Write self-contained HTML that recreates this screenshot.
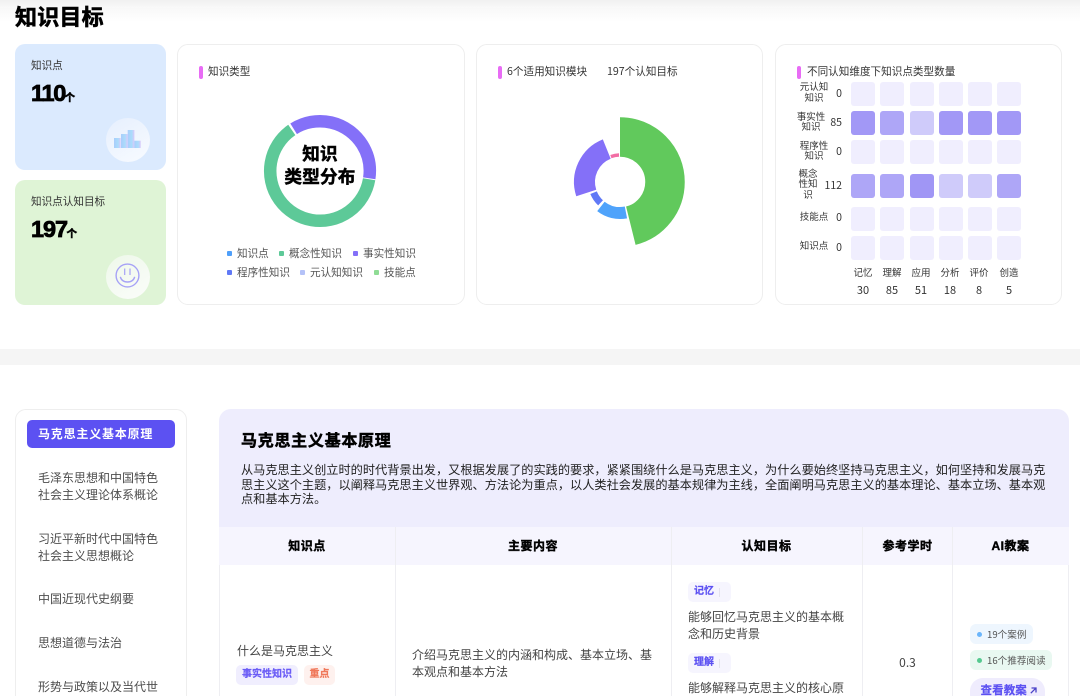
<!DOCTYPE html>
<html lang="zh"><head><meta charset="utf-8"><style>
*{box-sizing:border-box;margin:0;padding:0}
html,body{width:1080px;height:696px;overflow:hidden;background:#fff}
body{position:relative;font-family:"Liberation Sans","Noto Sans CJK SC",sans-serif;color:#333}
.a{position:absolute;white-space:nowrap}
.t{position:absolute;white-space:nowrap;line-height:14px}
.n{font-family:"Noto Sans CJK SC","Liberation Sans",sans-serif}
.b{font-weight:700}
.h{font-weight:700;color:#000;-webkit-text-stroke:.6px #000}
.card{position:absolute;top:44px;height:261px;background:#fff;border:1px solid #eeeeee;border-radius:11px}
.bar{position:absolute;top:66px;width:4px;height:13px;border-radius:2px;background:#e86cf5}
.c{position:absolute;width:24px;height:24px;border-radius:3px;background:#f0eefe}
.lab{position:absolute;font-size:9.5px;line-height:10.5px;text-align:center;color:#333;white-space:nowrap}
.ctr{position:absolute;text-align:center;font-size:9.5px;line-height:14px;color:#333}
.num{position:absolute;left:818px;width:24px;text-align:right;font-size:10.5px;line-height:14px;color:#333;font-family:"Noto Sans CJK SC","Liberation Sans",sans-serif}
.cnt{position:absolute;top:282.5px;width:30px;text-align:center;font-size:11px;line-height:14px;color:#333;font-family:"Noto Sans CJK SC","Liberation Sans",sans-serif}
.lg{position:absolute;font-size:10.6px;line-height:14px;color:#555;white-space:nowrap}
.sq{position:absolute;width:5px;height:5px;border-radius:1px}
.nav{position:absolute;left:38px;font-size:12px;line-height:17px;color:#4d4d4d;white-space:nowrap}
.vl{position:absolute;width:1px;background:#eeeef2}
.th{position:absolute;top:527px;height:38px;line-height:39px;text-align:center;font-size:12px;font-weight:700;color:#000;-webkit-text-stroke:.4px #000;letter-spacing:.04em}
.tag{position:absolute;height:20px;line-height:19px;border-radius:5px;font-size:10px;font-weight:700;white-space:nowrap;-webkit-text-stroke:.2px currentColor}
.pill{position:absolute;height:20px;line-height:20px;border-radius:6px;font-size:9.6px;color:#555;white-space:nowrap}
.dot{position:absolute;width:5px;height:5px;border-radius:50%;top:7.5px;left:6.5px}
</style></head><body>
<div class="a" style="left:0;top:0;width:1080px;height:8px;background:linear-gradient(#f0f0f0,#f9f9f9)"></div>
<div class="a" style="left:0;top:8px;width:1080px;height:14px;background:linear-gradient(#f8f8f8,#fff)"></div>
<div class="a h" style="left:15px;top:4px;font-size:22px;line-height:28px;letter-spacing:.2px">知识目标</div>

<div class="a" style="left:15px;top:44px;width:151px;height:126px;border-radius:10px;background:#dbeafe"></div>
<div class="t" style="left:31px;top:58.5px;font-size:10.6px;color:#333">知识点</div>
<div class="a h" style="left:31px;top:79px;font-size:23.5px;line-height:28px;letter-spacing:-1.3px;-webkit-text-stroke:.8px #000">110</div>
<div class="a h" style="left:64.5px;top:90px;font-size:10.5px;line-height:16px;-webkit-text-stroke:.5px #000">个</div>
<div class="a" style="left:106px;top:118px;width:44px;height:44px;border-radius:50%;background:linear-gradient(150deg,#e6effe,#f8fbff)"></div>
<svg class="a" style="left:106px;top:118px" width="44" height="44"><defs><linearGradient id="g"><stop offset="0" stop-color="#a9cdfb"/><stop offset=".6" stop-color="#aadcfb"/><stop offset="1" stop-color="#dcc8fa"/></linearGradient></defs><rect x="8" y="20" width="6.700" height="10" fill="url(#g)"/><rect x="15" y="16" width="6.700" height="14" fill="url(#g)"/><rect x="21.700" y="12" width="6.700" height="18" fill="url(#g)"/><rect x="28.300" y="22.700" width="6.400" height="7.300" fill="url(#g)"/></svg>

<div class="a" style="left:15px;top:180px;width:151px;height:125px;border-radius:10px;background:#dff4d6"></div>
<div class="t" style="left:31px;top:194.5px;font-size:10.6px;color:#333">知识点认知目标</div>
<div class="a h" style="left:31px;top:215px;font-size:23.5px;line-height:28px;letter-spacing:-1.100px;-webkit-text-stroke:.8px #000">197</div>
<div class="a h" style="left:66.500px;top:226px;font-size:10.500px;line-height:16px;-webkit-text-stroke:.5px #000">个</div>
<div class="a" style="left:106px;top:255px;width:44px;height:44px;border-radius:50%;background:linear-gradient(150deg,#eef8ea,#fbfdfa)"></div>
<svg class="a" style="left:106px;top:255px" width="44" height="44" fill="none" stroke="#a6a2f6" stroke-width="1.400"><circle cx="21.500" cy="20.500" r="11.400"/><path d="M18.700 13.500v6.500M24 13.500v6.500" stroke-width="1.200"/><path d="M14.300 21.800c1 3.600 3.800 5.200 7.200 5.200s6.200-1.600 7.200-5.200"/></svg>

<div class="card" style="left:176.500px;width:288px"></div>
<div class="bar" style="left:199px"></div>
<div class="t" style="left:208px;top:65px;font-size:10.6px">知识类型</div>
<svg class="a" style="left:260px;top:111px" width="120" height="120" fill="none">
<circle cx="60" cy="60" r="49.800" stroke="#5dc998" stroke-width="12.500" pathLength="360" stroke-dasharray="226 134" transform="rotate(9.500 60 60)"/>
<circle cx="60" cy="60" r="49.800" stroke="#8470f8" stroke-width="12.500" pathLength="360" stroke-dasharray="130.500 229.500" transform="rotate(-122 60 60)"/>
</svg>
<div class="a h" style="left:270px;top:142.500px;width:100px;text-align:center;font-size:17.600px;line-height:23.500px;letter-spacing:.2px;-webkit-text-stroke:.5px #000">知识<br>类型分布</div>
<div class="sq" style="left:227px;top:251px;background:#4f9ffa"></div><div class="lg" style="left:237px;top:247px">知识点</div>
<div class="sq" style="left:279px;top:251px;background:#5dc998"></div><div class="lg" style="left:289px;top:247px">概念性知识</div>
<div class="sq" style="left:353px;top:251px;background:#8470f8"></div><div class="lg" style="left:363px;top:247px">事实性知识</div>
<div class="sq" style="left:227px;top:270px;background:#6079f6"></div><div class="lg" style="left:237px;top:266px">程序性知识</div>
<div class="sq" style="left:300px;top:270px;background:#b4c2f8"></div><div class="lg" style="left:310px;top:266px">元认知知识</div>
<div class="sq" style="left:374px;top:270px;background:#8fdc95"></div><div class="lg" style="left:384px;top:266px">技能点</div>

<div class="card" style="left:475.500px;width:287px"></div>
<div class="bar" style="left:498px"></div>
<div class="t n" style="left:507px;top:64.500px;font-size:10.600px">6个适用知识模块</div>
<div class="t n" style="left:607px;top:64.500px;font-size:10.600px">197个认知目标</div>
<svg class="a" style="left:550px;top:112px" width="140" height="140" fill="none">
<circle cx="70" cy="70" r="45" stroke="#61c95c" stroke-width="39.500" pathLength="360" stroke-dasharray="166 194" transform="rotate(-90 70 70)"/>
<circle cx="70" cy="70" r="31" stroke="#4fa3fb" stroke-width="12" pathLength="360" stroke-dasharray="49 311" transform="rotate(79 70 70)"/>
<circle cx="70" cy="70" r="28.500" stroke="#6079f6" stroke-width="7" pathLength="360" stroke-dasharray="25 335" transform="rotate(133 70 70)"/>
<circle cx="70" cy="70" r="35.500" stroke="#8470f8" stroke-width="21" pathLength="360" stroke-dasharray="86 274" transform="rotate(162 70 70)"/>
<circle cx="70" cy="70" r="27" stroke="#f26da4" stroke-width="3.500" pathLength="360" stroke-dasharray="17 343" transform="rotate(251 70 70)"/>
</svg>

<div class="card" style="left:774.500px;width:287px"></div>
<div class="bar" style="left:797px"></div>
<div class="t" style="left:807px;top:65px;font-size:10.600px">不同认知维度下知识点类型数量</div>

<div class="lab" style="left:790px;top:83px;width:48px">元认知<br>知识</div><div class="num" style="top:86.500px">0</div>
<div class="lab" style="left:791px;top:112.500px;width:40px">事实性<br>知识</div><div class="num" style="top:115.500px">85</div>
<div class="lab" style="left:792px;top:141.500px;width:44px">程序性<br>知识</div><div class="num" style="top:145px">0</div>
<div class="lab" style="left:790px;top:169.500px;width:36px">概念<br>性知<br>识</div><div class="num" style="top:178.500px">112</div>
<div class="lab" style="left:794px;top:212.500px;width:40px">技能点</div><div class="num" style="top:211px">0</div>
<div class="lab" style="left:794px;top:241.500px;width:40px">知识点</div><div class="num" style="top:240.500px">0</div>

<div class="c" style="left:851px;top:82px"></div><div class="c" style="left:880px;top:82px"></div><div class="c" style="left:909.500px;top:82px"></div><div class="c" style="left:939px;top:82px"></div><div class="c" style="left:968px;top:82px"></div><div class="c" style="left:997px;top:82px"></div>
<div class="c" style="left:851px;top:111px;background:#a298f6"></div><div class="c" style="left:880px;top:111px;background:#aea6f7"></div><div class="c" style="left:909.500px;top:111px;background:#cfcbfa"></div><div class="c" style="left:939px;top:111px;background:#a298f6"></div><div class="c" style="left:968px;top:111px;background:#a298f6"></div><div class="c" style="left:997px;top:111px;background:#a298f6"></div>
<div class="c" style="left:851px;top:140px"></div><div class="c" style="left:880px;top:140px"></div><div class="c" style="left:909.500px;top:140px"></div><div class="c" style="left:939px;top:140px"></div><div class="c" style="left:968px;top:140px"></div><div class="c" style="left:997px;top:140px"></div>
<div class="c" style="left:851px;top:173.500px;background:#aea6f7"></div><div class="c" style="left:880px;top:173.500px;background:#aea6f7"></div><div class="c" style="left:909.500px;top:173.500px;background:#a096f5"></div><div class="c" style="left:939px;top:173.500px;background:#cfcbfa"></div><div class="c" style="left:968px;top:173.500px;background:#cfcbfa"></div><div class="c" style="left:997px;top:173.500px;background:#aea6f7"></div>
<div class="c" style="left:851px;top:207px"></div><div class="c" style="left:880px;top:207px"></div><div class="c" style="left:909.500px;top:207px"></div><div class="c" style="left:939px;top:207px"></div><div class="c" style="left:968px;top:207px"></div><div class="c" style="left:997px;top:207px"></div>
<div class="c" style="left:851px;top:236px"></div><div class="c" style="left:880px;top:236px"></div><div class="c" style="left:909.500px;top:236px"></div><div class="c" style="left:939px;top:236px"></div><div class="c" style="left:968px;top:236px"></div><div class="c" style="left:997px;top:236px"></div>

<div class="ctr" style="left:848px;top:267px;width:30px">记忆</div><div class="ctr" style="left:877px;top:267px;width:30px">理解</div><div class="ctr" style="left:906px;top:267px;width:30px">应用</div><div class="ctr" style="left:935px;top:267px;width:30px">分析</div><div class="ctr" style="left:964px;top:267px;width:30px">评价</div><div class="ctr" style="left:994px;top:267px;width:30px">创造</div>
<div class="cnt" style="left:848px">30</div><div class="cnt" style="left:877px">85</div><div class="cnt" style="left:906px">51</div><div class="cnt" style="left:935px">18</div><div class="cnt" style="left:964px">8</div><div class="cnt" style="left:994px">5</div>

<div class="a" style="left:0;top:349px;width:1080px;height:16px;background:#f5f5f5"></div>

<div class="a" style="left:15px;top:409px;width:171.500px;height:300px;border:1px solid #eeeeee;border-radius:11px"></div>
<div class="a" style="left:27px;top:420px;width:148px;height:28px;border-radius:5px;background:#5c51f2"></div>
<div class="a b" style="left:38px;top:425px;font-size:12px;line-height:18px;letter-spacing:.8px;color:#fff">马克思主义基本原理</div>
<div class="nav" style="top:470px">毛泽东思想和中国特色<br>社会主义理论体系概论</div>
<div class="nav" style="top:530.500px">习近平新时代中国特色<br>社会主义思想概论</div>
<div class="nav" style="top:591px">中国近现代史纲要</div>
<div class="nav" style="top:635px">思想道德与法治</div>
<div class="nav" style="top:679px">形势与政策以及当代世</div>

<div class="a" style="left:219px;top:409px;width:850px;height:118px;background:#eeedfd;border-radius:12px 12px 0 0"></div>
<div class="a h" style="left:241px;top:430px;font-size:16px;line-height:23px;letter-spacing:.72px;-webkit-text-stroke:.5px #000">马克思主义基本原理</div>
<div class="t" style="left:241px;top:463px;font-size:12.200px;color:#222">从马克思主义创立时的时代背景出发，又根据发展了的实践的要求，紧紧围绕什么是马克思主义，为什么要始终坚持马克思主义，如何坚持和发展马克</div>
<div class="t" style="left:241px;top:477.500px;font-size:12.200px;color:#222">思主义这个主题，以阐释马克思主义世界观、方法论为重点，以人类社会发展的基本规律为主线，全面阐明马克思主义的基本理论、基本立场、基本观</div>
<div class="t" style="left:241px;top:492px;font-size:12.200px;color:#222">点和基本方法。</div>

<div class="a" style="left:219px;top:527px;width:850px;height:38px;background:#f6f5fe"></div>
<div class="th" style="left:219px;width:176px">知识点</div>
<div class="th" style="left:396px;width:274px">主要内容</div>
<div class="th" style="left:671px;width:191px">认知目标</div>
<div class="th" style="left:863px;width:89px">参考学时</div>
<div class="th" style="left:953px;width:115px">AI教案</div>
<div class="vl" style="left:219px;top:565px;height:131px"></div>
<div class="vl" style="left:395px;top:527px;height:169px"></div>
<div class="vl" style="left:671px;top:527px;height:169px"></div>
<div class="vl" style="left:862px;top:527px;height:169px"></div>
<div class="vl" style="left:952px;top:527px;height:169px"></div>
<div class="vl" style="left:1068px;top:565px;height:131px"></div>

<div class="t" style="left:237px;top:644px;font-size:12px;color:#444">什么是马克思主义</div>
<div class="tag" style="left:236px;top:665px;width:62px;text-align:center;background:#f0eefe;color:#6a5cf6">事实性知识</div>
<div class="tag" style="left:304px;top:665px;width:31px;text-align:center;background:#fef1ee;color:#f0785a">重点</div>
<div class="a" style="left:412px;top:646.500px;font-size:12px;line-height:17.500px;color:#444">介绍马克思主义的内涵和构成、基本立场、基<br>本观点和基本方法</div>

<div class="tag" style="left:688px;top:582px;width:43px;padding-left:6px;background:#f6f5fe;color:#5c51f2">记忆<span style="position:absolute;left:31px;top:6px;width:1px;height:9px;background:#e4e3ee"></span></div>
<div class="a" style="left:688px;top:608.500px;font-size:12px;line-height:17px;color:#444">能够回忆马克思主义的基本概<br>念和历史背景</div>
<div class="tag" style="left:688px;top:653px;width:43px;padding-left:6px;background:#f6f5fe;color:#5c51f2">理解<span style="position:absolute;left:31px;top:6px;width:1px;height:9px;background:#e4e3ee"></span></div>
<div class="a" style="left:688px;top:680px;font-size:12px;line-height:17px;color:#444">能够解释马克思主义的核心原</div>
<div class="a n" style="left:863px;top:655px;width:89px;text-align:center;font-size:12px;line-height:16px;color:#444">0.3</div>

<div class="pill n" style="left:970px;top:624px;width:63px;padding-left:17px;background:#eef6fe"><span class="dot" style="background:#6bb5fb"></span>19个案例</div>
<div class="pill n" style="left:970px;top:650px;width:82px;padding-left:17px;background:#e9f8f1"><span class="dot" style="background:#55c98f"></span>16个推荐阅读</div>
<div class="a" style="left:970px;top:678px;width:75px;height:30px;border-radius:13px;background:#efecfd"></div>
<div class="a b" style="left:980.500px;top:683px;font-size:11.500px;line-height:16px;letter-spacing:.1px;color:#5c51f2;-webkit-text-stroke:.2px #5c51f2">查看教案</div>
<svg class="a" style="left:1029.500px;top:687px" width="7" height="7" fill="none" stroke="#4a42c8" stroke-width="1.300"><path d="M.8 6.200L5.800 1.200M1.500 1H6V5.500"/></svg>
</body></html>
